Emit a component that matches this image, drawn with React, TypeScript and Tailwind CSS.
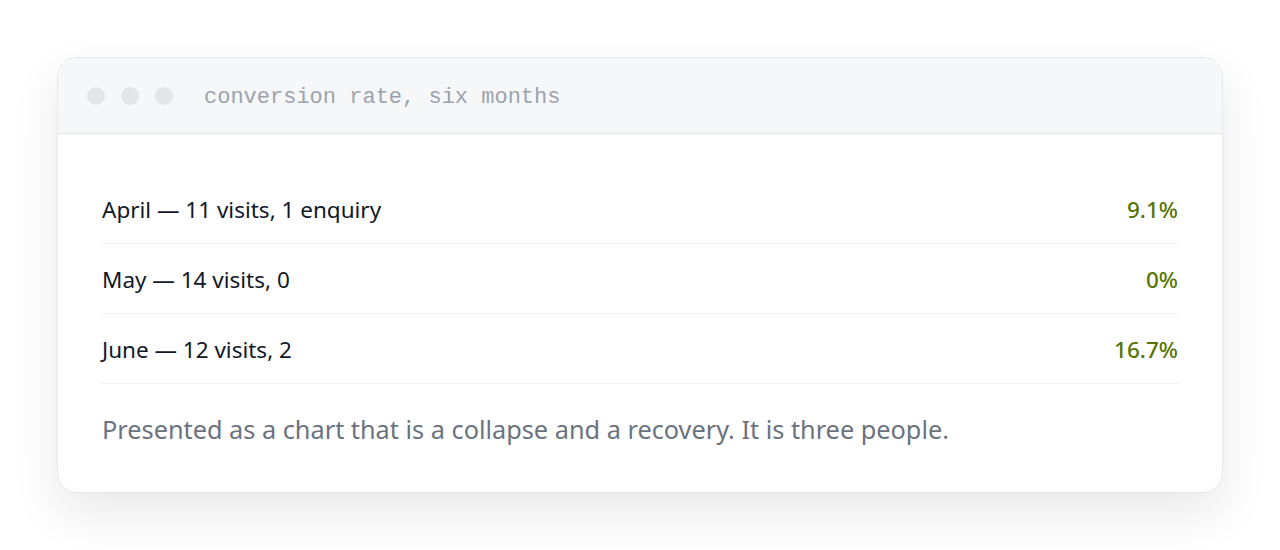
const rows = [
  { label: "April — 11 visits, 1 enquiry", value: "9.1%" },
  { label: "May — 14 visits, 0", value: "0%" },
  { label: "June — 12 visits, 2", value: "16.7%" },
];

export default function App() {
  return (
    <div className="min-h-[550px] bg-white pl-[57px] pr-[57px] pt-[57px] font-['Noto_Sans',sans-serif]">
      <div className="overflow-hidden rounded-[20px] border border-[#e5e7eb] bg-white shadow-[0_20px_50px_rgba(0,0,0,0.09)]">
        <div className="flex h-[76px] items-center border-b border-[#e3e5e8] bg-[#f6f7f8] px-[29px]">
          <div className="flex gap-[16px]">
            <span className="h-[18px] w-[18px] rounded-full bg-[#e3e5e8]" />
            <span className="h-[18px] w-[18px] rounded-full bg-[#e3e5e8]" />
            <span className="h-[18px] w-[18px] rounded-full bg-[#e3e5e8]" />
          </div>
          <span className="ml-[31px] mt-[4px] font-['Liberation_Mono',monospace] text-[22px] text-[#9ca3af]">
            conversion rate, six months
          </span>
        </div>
        <div className="px-[44px] pt-[40px] pb-[46px]">
          {rows.map((r) => (
            <div
              key={r.label}
              className="flex h-[70px] items-center justify-between border-b border-[#eeeff1] pt-[2px] text-[22.5px]"
            >
              <span className="text-[#111827]">{r.label}</span>
              <span className="font-medium text-[#587503]">{r.value}</span>
            </div>
          ))}
          <p className="mt-[28px] text-[25.3px] leading-[34px] text-[#6b7280]">
            Presented as a chart that is a collapse and a recovery. It is three people.
          </p>
        </div>
      </div>
    </div>
  );
}
